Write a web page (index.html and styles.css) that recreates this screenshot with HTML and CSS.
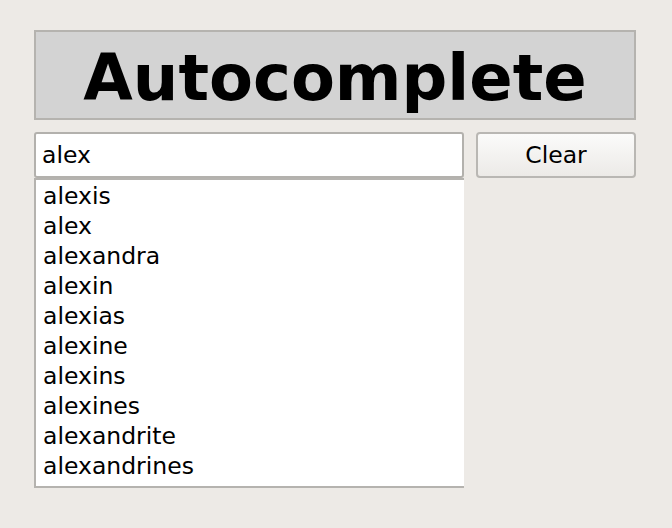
FILE: index.html
```html
<!DOCTYPE html>
<html>
<head>
<meta charset="utf-8">
<link rel="stylesheet" href="styles.css">
</head>
<body>
<div class="app">
  <div class="title">Autocomplete</div>
  <div class="row">
    <div class="combo">
      <input class="entry" type="text" value="alex">
      <ul class="list">
        <li>alexis</li>
        <li>alex</li>
        <li>alexandra</li>
        <li>alexin</li>
        <li>alexias</li>
        <li>alexine</li>
        <li>alexins</li>
        <li>alexines</li>
        <li>alexandrite</li>
        <li>alexandrines</li>
      </ul>
    </div>
    <button class="clear" type="button">Clear</button>
  </div>
</div>
</body>
</html>
```

FILE: styles.css
```css
html, body {
  margin: 0;
  padding: 0;
  background: #edeae6;
  width: 672px;
  height: 528px;
  overflow: hidden;
}

.app {
  padding: 30px 0 0 34px;
  font-family: "DejaVu Sans", sans-serif;
  color: #000;
}

.title {
  box-sizing: border-box;
  width: 602px;
  height: 90px;
  border: 2px solid #b5b3af;
  background: #d3d3d3;
  font-weight: bold;
  font-size: 64px;
  line-height: 74px;
  padding-top: 9px;
  text-align: center;
}

.row {
  display: flex;
  align-items: flex-start;
  gap: 12px;
  margin-top: 12px;
}

.combo {
  display: flex;
  flex-direction: column;
  width: 430px;
}

.entry {
  box-sizing: border-box;
  width: 430px;
  height: 46px;
  margin: 0;
  border: 2px solid #b3b1ad;
  border-radius: 3px;
  background: #fff;
  padding: 0 0 0 6px;
  font-family: "DejaVu Sans", sans-serif;
  font-size: 23.5px;
  color: #000;
  outline: none;
}

.list {
  box-sizing: border-box;
  list-style: none;
  margin: 0;
  width: 430px;
  height: 310px;
  padding: 1px 0 0 7px;
  background: #fff;
  border: 2px solid #b5b3af;
  border-right: none;
  font-size: 23.5px;
  line-height: 30px;
}

.clear {
  box-sizing: border-box;
  width: 160px;
  height: 46px;
  margin: 0;
  border: 2px solid #b9b7b3;
  border-radius: 4px;
  background: linear-gradient(#fbfbfa, #eceae7);
  font-family: "DejaVu Sans", sans-serif;
  font-size: 23.5px;
  color: #000;
  padding: 0;
}
```
